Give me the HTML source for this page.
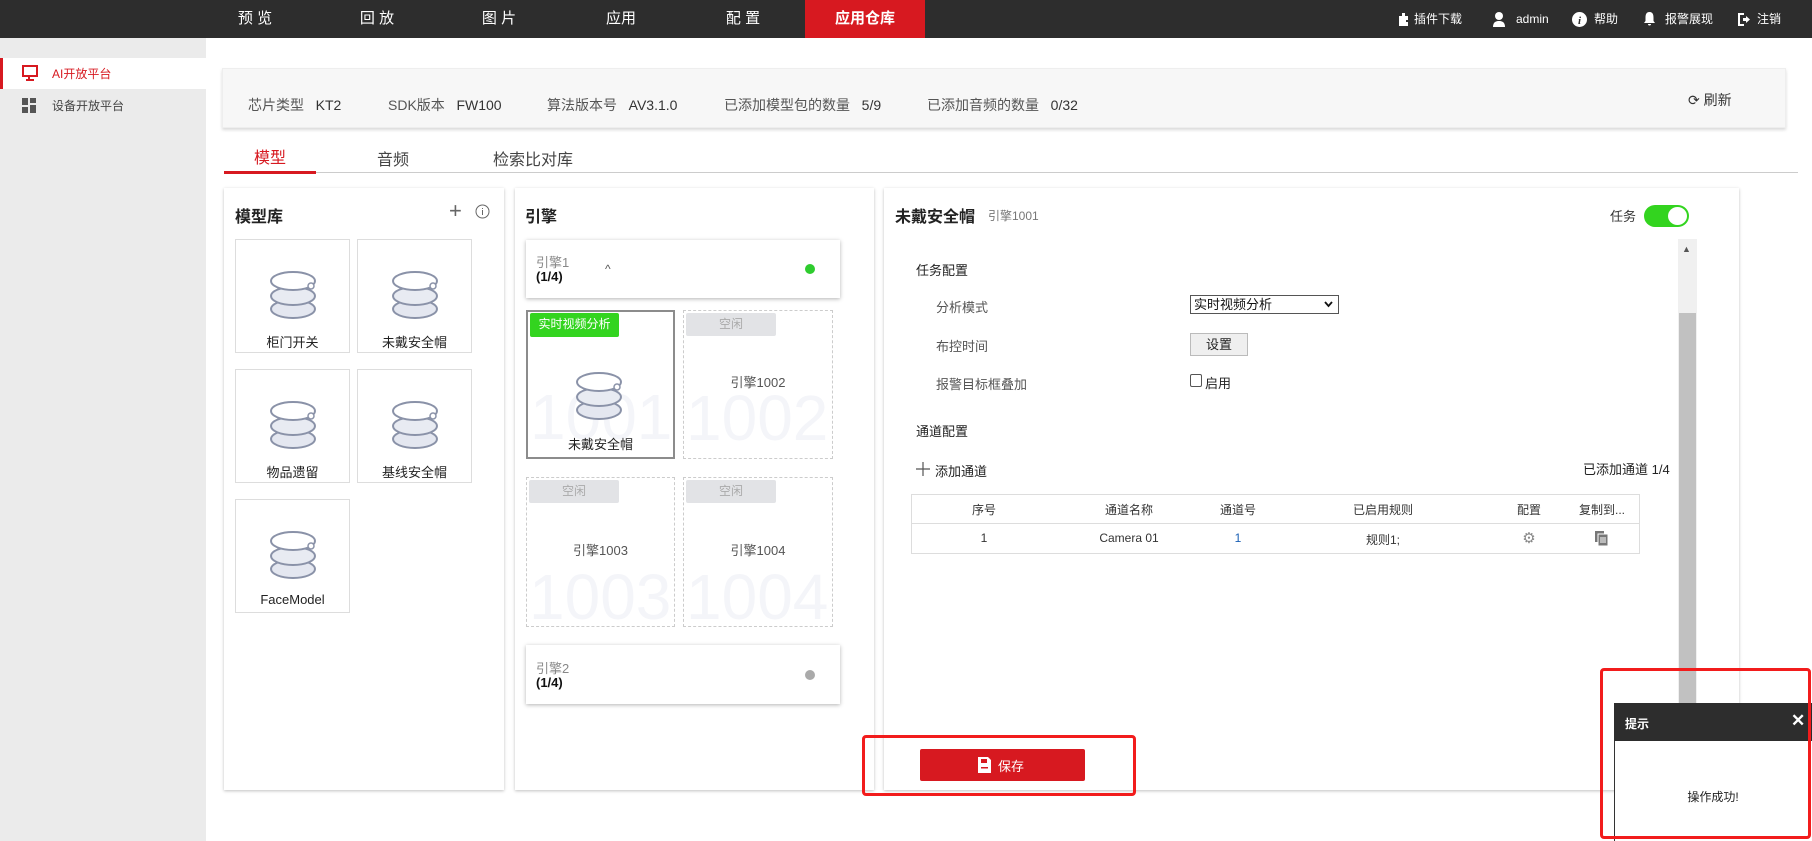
<!DOCTYPE html>
<html><head><meta charset="utf-8"><style>
*{margin:0;padding:0;box-sizing:border-box}
body{width:1812px;height:841px;position:relative;overflow:hidden;background:#fff;font-family:"Liberation Sans","Noto Sans CJK SC",sans-serif;font-size:13px;color:#333}
.a{position:absolute}
.top{left:0;top:0;width:1812px;height:38px;background:#2d2d2d}
.nav{top:0;height:38px;line-height:38px;color:#fff;font-size:15px;text-align:center;width:122px}
.rn{top:0;height:38px;line-height:38px;color:#fff;font-size:12px}
.side{left:0;top:38px;width:206px;height:803px;background:#ebebeb}
.panel{background:#fff;box-shadow:0 1px 3px rgba(0,0,0,.25)}
.card{border:1px solid #ddd;background:#fff;width:115px;height:114px}
.card .lb{position:absolute;left:0;right:0;top:92px;text-align:center;font-size:13px;color:#222}
.tag{font-size:12px;text-align:center;line-height:23px;border-radius:2px}
.wm{font-size:64px;color:#f4f5f9;white-space:nowrap;overflow:hidden;line-height:70px}
.th{font-size:12px;text-align:center;width:120px}
</style></head><body>
<div class="a top"></div>
<div class="a nav" style="left:194px">预 览</div>
<div class="a nav" style="left:316px">回 放</div>
<div class="a nav" style="left:438px">图 片</div>
<div class="a nav" style="left:560px">应用</div>
<div class="a nav" style="left:682px">配 置</div>
<div class="a nav" style="left:805px;width:120px;background:#d71920;font-weight:bold">应用仓库</div>
<svg class="a" style="left:1396px;top:11px" width="15" height="16" viewBox="0 0 15 16"><path d="M3 5h3V2h3v3h3v4h-2v2h2v4H3z" fill="#fff"/></svg>
<div class="a rn" style="left:1414px">插件下载</div>
<svg class="a" style="left:1492px;top:11px" width="14" height="16" viewBox="0 0 14 16"><circle cx="7" cy="5" r="4" fill="#fff"/><path d="M1 16c0-5 3-6 6-6s6 1 6 6z" fill="#fff"/></svg>
<div class="a rn" style="left:1516px">admin</div>
<svg class="a" style="left:1572px;top:12px" width="15" height="15"><circle cx="7.5" cy="7.5" r="7.5" fill="#fff"/><text x="7.5" y="12" font-size="11" font-weight="bold" text-anchor="middle" fill="#2d2d2d" font-family="Liberation Serif" font-style="italic">i</text></svg>
<div class="a rn" style="left:1594px">帮助</div>
<svg class="a" style="left:1643px;top:11px" width="13" height="16" viewBox="0 0 13 16"><path d="M6.5 1C3 1 2.5 4 2.5 7v3L1 12h11l-1.5-2V7c0-3-.5-6-4-6z M5 13h3a1.5 1.5 0 0 1-3 0z" fill="#fff"/></svg>
<div class="a rn" style="left:1665px">报警展现</div>
<svg class="a" style="left:1737px;top:12px" width="13" height="15" viewBox="0 0 13 15"><path d="M1 1h6v2H3v9h4v2H1z M6 6h3V4l4 3.5L9 11V9H6z" fill="#fff"/></svg>
<div class="a rn" style="left:1757px">注销</div>

<div class="a side"></div>
<div class="a" style="left:0;top:58px;width:206px;height:31px;background:#fff;border-left:3px solid #d71920"></div>
<svg class="a" style="left:22px;top:65px" width="16" height="17" viewBox="0 0 16 17"><rect x="1" y="1" width="14" height="10" fill="none" stroke="#d71920" stroke-width="2"/><path d="M7 11v3M4 15h8" stroke="#d71920" stroke-width="2"/></svg>
<div class="a" style="left:52px;top:65px;color:#d71920;font-size:12px">AI开放平台</div>
<svg class="a" style="left:22px;top:98px" width="15" height="15"><rect x="0" y="0" width="6" height="7" fill="#555"/><rect x="8" y="0" width="6" height="5" fill="#555"/><rect x="0" y="9" width="6" height="6" fill="#555"/><rect x="8" y="7" width="6" height="8" fill="#555"/></svg>
<div class="a" style="left:52px;top:97px;color:#444;font-size:12px">设备开放平台</div>

<div class="a" style="left:222px;top:68px;width:1564px;height:60px;background:#f7f7f7;box-shadow:0 2px 3px rgba(0,0,0,.15);border:1px solid #eee"></div>
<div class="a" style="left:248px;top:95px;font-size:14px;color:#555;white-space:nowrap">芯片类型&nbsp;&nbsp;&nbsp;<span style="color:#333">KT2</span></div>
<div class="a" style="left:388px;top:95px;font-size:14px;color:#555;white-space:nowrap">SDK版本&nbsp;&nbsp;&nbsp;<span style="color:#333">FW100</span></div>
<div class="a" style="left:547px;top:95px;font-size:14px;color:#555;white-space:nowrap">算法版本号&nbsp;&nbsp;&nbsp;<span style="color:#333">AV3.1.0</span></div>
<div class="a" style="left:724px;top:95px;font-size:14px;color:#555;white-space:nowrap">已添加模型包的数量&nbsp;&nbsp;&nbsp;<span style="color:#333">5/9</span></div>
<div class="a" style="left:927px;top:95px;font-size:14px;color:#555;white-space:nowrap">已添加音频的数量&nbsp;&nbsp;&nbsp;<span style="color:#333">0/32</span></div>
<div class="a" style="left:1688px;top:90px;font-size:14px;color:#333">⟳ 刷新</div>

<div class="a" style="left:224px;top:172px;width:1574px;height:1px;background:#ccc"></div>
<div class="a" style="left:224px;top:171px;width:92px;height:3px;background:#d71920"></div>
<div class="a" style="left:254px;top:144px;font-size:16px;color:#d71920">模型</div>
<div class="a" style="left:377px;top:146px;font-size:16px;color:#444">音频</div>
<div class="a" style="left:493px;top:146px;font-size:16px;color:#444">检索比对库</div>

<!-- panel1 -->
<div class="a panel" style="left:224px;top:188px;width:280px;height:602px"></div>
<div class="a" style="left:235px;top:203px;font-size:16px;font-weight:bold;color:#222">模型库</div>
<div class="a" style="left:449px;top:198px;font-size:22px;color:#666;font-weight:300">+</div>
<svg class="a" style="left:475px;top:204px" width="15" height="15"><circle cx="7.5" cy="7.5" r="6.5" fill="none" stroke="#666"/><path d="M7.5 6v5M7.5 4v1" stroke="#666"/></svg>
<svg width="0" height="0" style="position:absolute"><defs><g id="db"><ellipse cx="24" cy="39" rx="22" ry="9" fill="#e4e7f0" stroke="#8a92a8" stroke-width="2"/><ellipse cx="24" cy="26" rx="22" ry="9" fill="#e8ebf2" stroke="#8a92a8" stroke-width="2"/><ellipse cx="24" cy="11" rx="22" ry="9" fill="#fff" stroke="#8a92a8" stroke-width="2"/><circle cx="42" cy="16" r="3" fill="#fff" stroke="#8a92a8" stroke-width="1.5"/></g></defs></svg>
<div class="a card" style="left:235px;top:239px"><svg class="a" style="left:33px;top:30px" width="50" height="52"><use href="#db"/></svg><div class="lb">柜门开关</div></div>
<div class="a card" style="left:357px;top:239px"><svg class="a" style="left:33px;top:30px" width="50" height="52"><use href="#db"/></svg><div class="lb">未戴安全帽</div></div>
<div class="a card" style="left:235px;top:369px"><svg class="a" style="left:33px;top:30px" width="50" height="52"><use href="#db"/></svg><div class="lb">物品遗留</div></div>
<div class="a card" style="left:357px;top:369px"><svg class="a" style="left:33px;top:30px" width="50" height="52"><use href="#db"/></svg><div class="lb">基线安全帽</div></div>
<div class="a card" style="left:235px;top:499px"><svg class="a" style="left:33px;top:30px" width="50" height="52"><use href="#db"/></svg><div class="lb">FaceModel</div></div>

<!-- panel2 -->
<div class="a panel" style="left:515px;top:188px;width:359px;height:602px"></div>
<div class="a" style="left:525px;top:203px;font-size:16px;font-weight:bold;color:#222">引擎</div>
<div class="a panel" style="left:526px;top:240px;width:314px;height:58px;box-shadow:0 1px 4px rgba(0,0,0,.3)"></div>
<div class="a" style="left:536px;top:252px;font-size:13px;color:#888">引擎1</div>
<div class="a" style="left:536px;top:269px;font-size:13px;font-weight:bold;color:#111">(1/4)</div>
<div class="a" style="left:605px;top:262px;font-size:12px;color:#555">^</div>
<div class="a" style="left:805px;top:264px;width:10px;height:10px;border-radius:50%;background:#2ecc2e"></div>

<div class="a" style="left:526px;top:310px;width:149px;height:149px;border:2px solid #8c8c8c;overflow:hidden"><div class="a wm" style="left:2px;top:70px">1001</div></div>
<div class="a tag" style="left:530px;top:313px;width:89px;height:24px;background:#33d41f;color:#fff">实时视频分析</div>
<svg class="a" style="left:575px;top:371px" width="50" height="52"><use href="#db"/></svg>
<div class="a" style="left:526px;top:434px;width:149px;text-align:center;font-size:13px;color:#222">未戴安全帽</div>

<div class="a" style="left:683px;top:310px;width:150px;height:149px;border:1px dashed #ccc;overflow:hidden"><div class="a wm" style="left:2px;top:72px">1002</div></div>
<div class="a tag" style="left:686px;top:313px;width:90px;background:#e2e3e6;color:#aaa">空闲</div>
<div class="a" style="left:683px;top:372px;width:150px;text-align:center;color:#555">引擎1002</div>

<div class="a" style="left:526px;top:477px;width:149px;height:150px;border:1px dashed #ccc;overflow:hidden"><div class="a wm" style="left:2px;top:84px">1003</div></div>
<div class="a tag" style="left:529px;top:480px;width:90px;background:#e2e3e6;color:#aaa">空闲</div>
<div class="a" style="left:526px;top:540px;width:149px;text-align:center;color:#555">引擎1003</div>
<div class="a" style="left:683px;top:477px;width:150px;height:150px;border:1px dashed #ccc;overflow:hidden"><div class="a wm" style="left:2px;top:84px">1004</div></div>
<div class="a tag" style="left:686px;top:480px;width:90px;background:#e2e3e6;color:#aaa">空闲</div>
<div class="a" style="left:683px;top:540px;width:150px;text-align:center;color:#555">引擎1004</div>

<div class="a panel" style="left:526px;top:645px;width:314px;height:59px;box-shadow:0 1px 4px rgba(0,0,0,.3)"></div>
<div class="a" style="left:536px;top:658px;font-size:13px;color:#888">引擎2</div>
<div class="a" style="left:536px;top:675px;font-size:13px;font-weight:bold;color:#111">(1/4)</div>
<div class="a" style="left:805px;top:670px;width:10px;height:10px;border-radius:50%;background:#aaa"></div>

<!-- panel3 -->
<div class="a panel" style="left:884px;top:188px;width:855px;height:602px"></div>
<div class="a" style="left:895px;top:203px;font-size:16px;font-weight:bold;color:#222">未戴安全帽</div>
<div class="a" style="left:988px;top:207px;font-size:12px;color:#777">引擎1001</div>
<div class="a" style="left:1610px;top:206px;font-size:13px;color:#333">任务</div>
<div class="a" style="left:1644px;top:205px;width:45px;height:22px;border-radius:11px;background:#33d41f"></div>
<div class="a" style="left:1668px;top:207px;width:19px;height:18px;border-radius:50%;background:#fff"></div>
<div class="a" style="left:1678px;top:239px;width:19px;height:560px;background:#f0f0f0"></div>
<div class="a" style="left:1679px;top:313px;width:17px;height:490px;background:#c1c1c1"></div>
<div class="a" style="left:1682px;top:244px;font-size:9px;color:#555">▲</div>

<div class="a" style="left:916px;top:260px;font-size:13px;color:#222">任务配置</div>
<div class="a" style="left:936px;top:297px;font-size:13px;color:#555">分析模式</div>
<div class="a" style="left:1190px;top:295px;width:149px;height:19px;border:1px solid #555;font-size:13px;line-height:17px;padding-left:3px;color:#111">实时视频分析<svg style="position:absolute;right:5px;top:5px" width="9" height="7"><path d="M1 1l3.5 4L8 1" fill="none" stroke="#111" stroke-width="1.8"/></svg></div>
<div class="a" style="left:936px;top:336px;font-size:13px;color:#555">布控时间</div>
<div class="a" style="left:1190px;top:333px;width:58px;height:23px;border:1px solid #bbb;background:#efefef;font-size:13px;text-align:center;line-height:21px;color:#222">设置</div>
<div class="a" style="left:936px;top:374px;font-size:13px;color:#555">报警目标框叠加</div>
<div class="a" style="left:1190px;top:374px;width:12px;height:13px;border:1px solid #555;border-radius:2px"></div>
<div class="a" style="left:1205px;top:373px;font-size:13px;color:#222">启用</div>
<div class="a" style="left:916px;top:421px;font-size:13px;color:#222">通道配置</div>
<svg class="a" style="left:916px;top:462px" width="14" height="14"><path d="M7 0v14M0 7h14" stroke="#555" stroke-width="1.2"/></svg>
<div class="a" style="left:935px;top:461px;font-size:13px;color:#222">添加通道</div>
<div class="a" style="left:1583px;top:459px;font-size:13px;color:#222">已添加通道 1/4</div>
<div class="a" style="left:911px;top:494px;width:729px;height:60px;border:1px solid #ddd"></div>
<div class="a" style="left:911px;top:523px;width:729px;height:1px;background:#ddd"></div>
<div class="a th" style="left:924px;top:501px">序号</div>
<div class="a th" style="left:1069px;top:501px">通道名称</div>
<div class="a th" style="left:1178px;top:501px">通道号</div>
<div class="a th" style="left:1323px;top:501px">已启用规则</div>
<div class="a th" style="left:1469px;top:501px">配置</div>
<div class="a th" style="left:1542px;top:501px">复制到...</div>
<div class="a th" style="left:924px;top:531px">1</div>
<div class="a th" style="left:1069px;top:531px">Camera 01</div>
<div class="a th" style="left:1178px;top:531px;color:#1a5fb4">1</div>
<div class="a th" style="left:1323px;top:531px">规则1;</div>
<div class="a th" style="left:1469px;top:529px;color:#888;font-size:15px">⚙</div>
<svg class="a" style="left:1595px;top:531px" width="14" height="15"><rect x="0" y="0" width="9" height="11" fill="#777"/><rect x="3" y="3" width="10" height="12" fill="#777" stroke="#fff"/><path d="M5 7h6M5 9h6M5 11h6" stroke="#fff"/></svg>

<div class="a" style="left:920px;top:749px;width:165px;height:32px;background:#d71920;border-radius:2px"></div>
<svg class="a" style="left:978px;top:757px" width="13" height="16"><path d="M0 0h10l3 3v13H0z" fill="#fff"/><rect x="3" y="2" width="6" height="4" fill="#d71920"/><rect x="3" y="10" width="7" height="1.5" fill="#d71920"/></svg>
<div class="a" style="left:998px;top:756px;color:#fff;font-size:13px">保存</div>
<div class="a" style="left:862px;top:735px;width:274px;height:61px;border:3px solid #f21c1c;border-radius:4px"></div>

<div class="a" style="left:1614px;top:703px;width:198px;height:138px;background:#fff;border-left:1px solid #333"></div>
<div class="a" style="left:1614px;top:703px;width:198px;height:38px;background:#2d2d2d"></div>
<div class="a" style="left:1625px;top:715px;color:#fff;font-size:12px;font-weight:bold">提示</div>
<div class="a" style="left:1791px;top:711px;color:#fff;font-size:17px;font-weight:bold">✕</div>
<div class="a" style="left:1614px;top:788px;width:198px;text-align:center;font-size:12px;color:#222">操作成功!</div>
<div class="a" style="left:1600px;top:668px;width:211px;height:171px;border:3px solid #f21c1c;border-radius:4px"></div>
</body></html>
